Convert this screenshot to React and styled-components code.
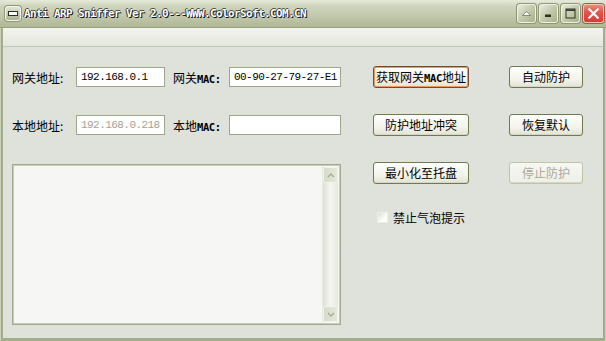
import styled, { createGlobalStyle } from "styled-components";

const GlobalStyle = createGlobalStyle`
  html, body {
    margin: 0;
    padding: 0;
    background: #dfe2da;
  }
  body {
    width: 606px;
    height: 341px;
    overflow: hidden;
  }
  * {
    box-sizing: border-box;
  }
`;

const Window = styled.div`
  width: 606px;
  height: 341px;
  display: flex;
  flex-direction: column;
  background: #dfe2da;
  font-family: "Noto Sans CJK SC", "DejaVu Sans", sans-serif;
  font-size: 12px;
  color: #000;
`;

const TitleBar = styled.div`
  height: 28px;
  flex: none;
  display: flex;
  align-items: center;
  padding: 0 2px 1px 5px;
  background: linear-gradient(#e8eadb 0%, #cfd5bc 22%, #c2c8ac 60%, #afb794 100%);
  border-radius: 6px 6px 0 0;
  border-bottom: 1px solid #98a27e;
`;

const SysIcon = styled.div`
  width: 16px;
  height: 15px;
  border: 1px solid #f4f6ee;
  border-radius: 3px;
  background: linear-gradient(#e2e6d4, #aab392);
  display: flex;
  align-items: center;
  justify-content: center;
  box-shadow: 0 0 0 1px #8f987a;
  &::after {
    content: "";
    width: 8px;
    height: 3px;
    background: #fff;
    border: 1px solid #2e3226;
  }
`;

const Title = styled.div`
  margin-left: 3px;
  flex: 1;
  font-family: "DejaVu Sans Mono", "Liberation Mono", monospace;
  font-weight: bold;
  font-size: 11px;
  letter-spacing: -0.62px;
  color: #fff;
  text-shadow: 1px 1px 0 #16180f, -1px 0 0 #2e3226, 0 -1px 0 #4a4e3e;
  white-space: nowrap;
`;

const CapButtons = styled.div`
  display: flex;
  gap: 3px;
  margin-top: 1px;
`;

const CapButton = styled.div`
  width: ${(p) => (p.$red ? 21 : 19)}px;
  height: 19px;
  border: 1px solid ${(p) => (p.$red ? "#f6c4b8" : "#eef1e4")};
  border-radius: 3px;
  display: flex;
  align-items: center;
  justify-content: center;
  box-shadow: 0 0 0 1px ${(p) => (p.$red ? "#a8584a" : "#8d9675")};
  background: ${(p) =>
    p.$red
      ? "linear-gradient(#ee8a76, #e0584a 40%, #d23e33)"
      : "linear-gradient(135deg, #e6eadb, #c3caac 50%, #a7b08c)"};
`;

const Frame = styled.div`
  flex: 1;
  display: flex;
  flex-direction: column;
  padding: 0 2px 3px 2px;
  background: #a3ad89;
  border-left: 1px solid #c9cfb8;
  border-right: 1px solid #c9cfb8;
`;

const MenuBand = styled.div`
  height: 19px;
  flex: none;
  background: linear-gradient(#f3f4ee, #e4e7de);
  border-bottom: 1px solid #c1c7b6;
`;

const Client = styled.div`
  flex: 1;
  display: flex;
  background: #dfe2da;
  padding: 20px 0 0 9px;
`;

const FieldsPane = styled.div`
  width: 329px;
  display: flex;
  flex-direction: column;
  gap: 28px;
`;

const FieldRow = styled.div`
  height: 20px;
  display: flex;
  align-items: center;
`;

const Label = styled.span`
  width: ${(p) => p.$w}px;
  margin-left: ${(p) => p.$ml || 0}px;
  white-space: nowrap;
  font-size: 12px;
`;

const Latin = styled.span`
  font-family: "DejaVu Sans Mono", "Liberation Mono", monospace;
  font-weight: bold;
  font-size: 10.5px;
  letter-spacing: -0.4px;
`;

const TextBox = styled.input`
  width: ${(p) => p.$w}px;
  height: 20px;
  padding: 0 0 1px 4px;
  border: 1px solid #9ea78b;
  background: #fff;
  font-family: "Liberation Mono", monospace;
  font-size: 11px;
  letter-spacing: -0.55px;
  color: ${(p) => (p.$muted ? "#a2a294" : "#000")};
  outline: none;
`;

const LogBox = styled.div`
  margin-top: 1px;
  width: 329px;
  height: 161px;
  display: flex;
  border: 1px solid #a2aa92;
  box-shadow: inset 0 0 0 1px #c8cdbb;
  background: #f6f6f5;
  padding: 2px;
`;

const LogText = styled.div`
  flex: 1;
`;

const ScrollBar = styled.div`
  width: 16px;
  display: flex;
  flex-direction: column;
  justify-content: space-between;
  background: linear-gradient(to right, #dde1d2, #f5f6ef 50%, #e5e8dc);
  border-left: 1px solid #e8eae2;
`;

const ScrollArrow = styled.div`
  height: 16px;
  display: flex;
  align-items: center;
  justify-content: center;
  border: 1px solid #f2f3ec;
  border-radius: 2px;
  background: linear-gradient(to right, #d6dbc7, #e4e8da);
`;

const ButtonPane = styled.div`
  margin-left: 32px;
  display: grid;
  grid-template-columns: 96px 74px;
  column-gap: 40px;
  row-gap: 26px;
  align-content: start;
  margin-top: -1px;
`;

const Button = styled.button`
  height: 22px;
  padding: 0 0 1px;
  border-radius: 3px;
  font-family: "Noto Sans CJK SC", sans-serif;
  font-size: 12px;
  white-space: nowrap;
  color: ${(p) => (p.disabled ? "#aaa898" : "#000")};
  border: 1px solid ${(p) => (p.$focused ? "#7a4a2c" : p.disabled ? "#bdc5a8" : "#6f7a52")};
  background: ${(p) =>
    p.disabled
      ? "linear-gradient(#f8f8f3, #eeefe6)"
      : "linear-gradient(#fefefc, #f4f4ec 60%, #e2e2d4)"};
  box-shadow: ${(p) => (p.$focused ? "inset 0 0 0 1px #e59a5e" : "inset 0 -1px 0 #d6d6c6")};
  cursor: default;
`;

const CheckRow = styled.label`
  grid-column: 1 / span 2;
  margin-top: -1px;
  margin-left: 4px;
  display: flex;
  align-items: center;
  gap: 5px;
  font-size: 12px;
`;

const CheckBox = styled.span`
  width: 11px;
  height: 11px;
  background: linear-gradient(135deg, #dcdfd4, #fbfbf8 60%, #fff);
  border: 1px solid #eceee7;
`;

function Chevron({ up }) {
  return (
    <svg width="8" height="5" viewBox="0 0 8 5">
      <path
        d={up ? "M1 4 L4 1 L7 4" : "M1 1 L4 4 L7 1"}
        fill="none"
        stroke="#a7ae94"
        strokeWidth="1.4"
      />
    </svg>
  );
}

export default function App() {
  return (
    <Window>
      <GlobalStyle />
      <TitleBar>
        <SysIcon />
        <Title>Anti ARP Sniffer Ver 2.0---WWW.ColorSoft.COM.CN</Title>
        <CapButtons>
          <CapButton>
            <svg width="9" height="5" viewBox="0 0 9 5">
              <path d="M0.5 4.5 L4.5 0.5 L8.5 4.5 Z" fill="#fff" stroke="#4a503a" strokeWidth="0.6" />
            </svg>
          </CapButton>
          <CapButton>
            <svg width="9" height="9" viewBox="0 0 9 9">
              <rect x="1" y="5.5" width="6" height="2.5" fill="#2e3226" />
            </svg>
          </CapButton>
          <CapButton>
            <svg width="11" height="11" viewBox="0 0 11 11">
              <rect x="1" y="1" width="9" height="9" fill="none" stroke="#2e3226" strokeWidth="1" />
              <line x1="1" y1="2.2" x2="10" y2="2.2" stroke="#2e3226" strokeWidth="1.5" />
            </svg>
          </CapButton>
          <CapButton $red>
            <svg width="13" height="13" viewBox="0 0 13 13">
              <path d="M1.5 1.5 L11.5 11.5 M11.5 1.5 L1.5 11.5" stroke="#fff" strokeWidth="2.2" />
            </svg>
          </CapButton>
        </CapButtons>
      </TitleBar>
      <Frame>
        <MenuBand />
        <Client>
          <FieldsPane>
            <FieldRow>
              <Label $w={64}>网关地址:</Label>
              <TextBox $w={89} value="192.168.0.1" readOnly />
              <Label $w={56} $ml={8}>
                网关<Latin>MAC:</Latin>
              </Label>
              <TextBox $w={112} value="00-90-27-79-27-E1" readOnly />
            </FieldRow>
            <FieldRow>
              <Label $w={64}>本地地址:</Label>
              <TextBox $w={89} value="192.168.0.218" readOnly $muted />
              <Label $w={56} $ml={8}>
                本地<Latin>MAC:</Latin>
              </Label>
              <TextBox $w={112} value="" readOnly />
            </FieldRow>
            <LogBox>
              <LogText />
              <ScrollBar>
                <ScrollArrow>
                  <Chevron up />
                </ScrollArrow>
                <ScrollArrow>
                  <Chevron />
                </ScrollArrow>
              </ScrollBar>
            </LogBox>
          </FieldsPane>
          <ButtonPane>
            <Button $focused>
              获取网关<Latin>MAC</Latin>地址
            </Button>
            <Button>自动防护</Button>
            <Button>防护地址冲突</Button>
            <Button>恢复默认</Button>
            <Button>最小化至托盘</Button>
            <Button disabled>停止防护</Button>
            <CheckRow>
              <CheckBox />
              禁止气泡提示
            </CheckRow>
          </ButtonPane>
        </Client>
      </Frame>
    </Window>
  );
}
